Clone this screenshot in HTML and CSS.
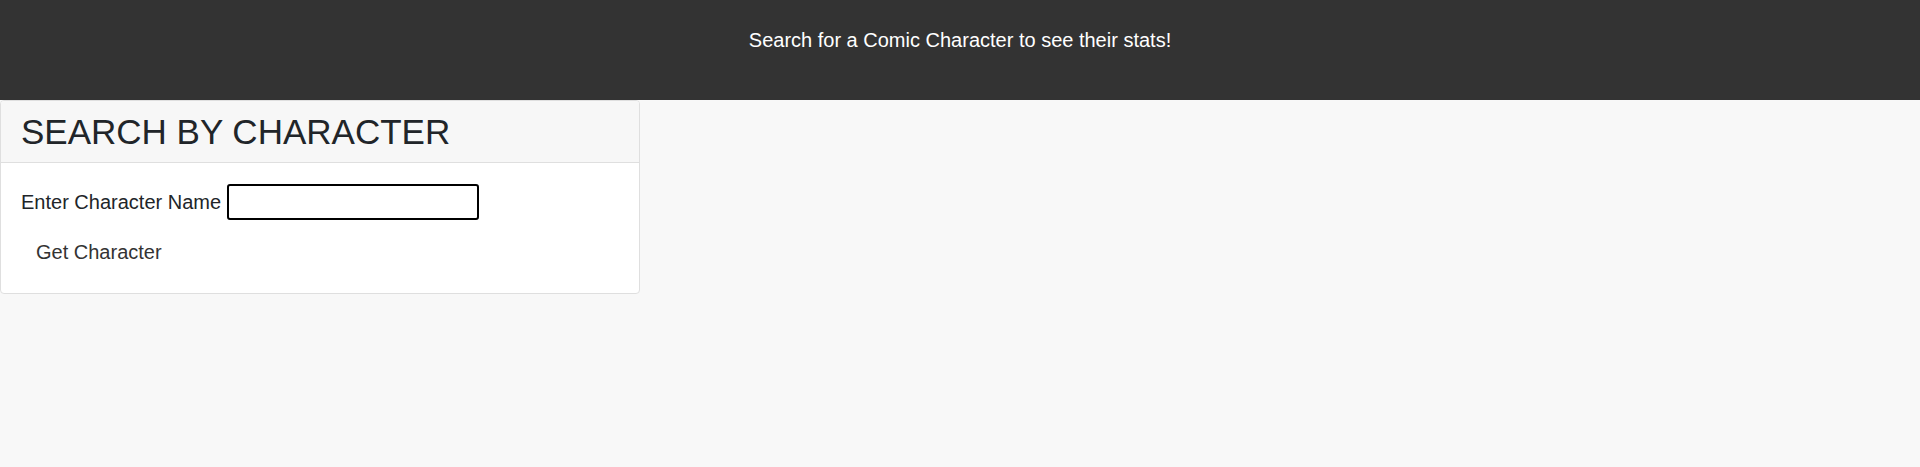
FILE: index.html
```html
<!DOCTYPE html>
<html lang="en">
<head>
<meta charset="utf-8">
<title>Comic Character Stats</title>
<link rel="stylesheet" href="styles.css">
</head>
<body>
  <header class="topbar">
    <p class="topbar-text">Search for a Comic Character to see their stats!</p>
  </header>
  <main class="content">
    <section class="card">
      <div class="card-header">
        <h2 class="card-title">SEARCH BY CHARACTER</h2>
      </div>
      <div class="card-body">
        <div class="field">
          <label class="field-label" for="name">Enter Character Name</label>
          <input class="field-input" id="name" type="text">
        </div>
        <button class="get-btn" type="button">Get Character</button>
      </div>
    </section>
  </main>
</body>
</html>
```

FILE: styles.css
```css
* { box-sizing: border-box; }

html, body {
  margin: 0;
  padding: 0;
}

body {
  background: #f8f8f8;
  font-family: "Liberation Sans", Arial, sans-serif;
  color: #212529;
  font-size: 20px;
  line-height: 30px;
}

.topbar {
  height: 100px;
  background: #333333;
  padding-top: 25px;
  text-align: center;
}

.topbar-text {
  margin: 0;
  color: #ffffff;
  font-size: 20px;
  line-height: 30px;
}

.content {
  display: flex;
}

.card {
  width: 640px;
  background: #ffffff;
  border: 1px solid #dfdfdf;
  border-radius: 4px;
  overflow: hidden;
}

.card-header {
  background: #f7f7f7;
  border-bottom: 1px solid #dfdfdf;
  padding: 12px 20px;
}

.card-title {
  margin: 0;
  font-size: 35px;
  font-weight: 400;
  line-height: 37px;
  color: #212529;
}

.card-body {
  padding: 21px 20px 20px;
}

.field {
  display: flex;
  align-items: center;
  gap: 6px;
}

.field-label {
  font-size: 20px;
  line-height: 30px;
  color: #212529;
}

.field-input {
  width: 252px;
  height: 36px;
  border: 2px solid #000000;
  border-radius: 3px;
  background: #ffffff;
  padding: 0 6px;
  font-family: inherit;
  font-size: 18px;
  outline: none;
}

.get-btn {
  display: block;
  margin-top: 11px;
  padding: 6px 15px;
  border: none;
  background: transparent;
  font-family: inherit;
  font-size: 20px;
  line-height: 30px;
  color: #333333;
  cursor: pointer;
}
```
